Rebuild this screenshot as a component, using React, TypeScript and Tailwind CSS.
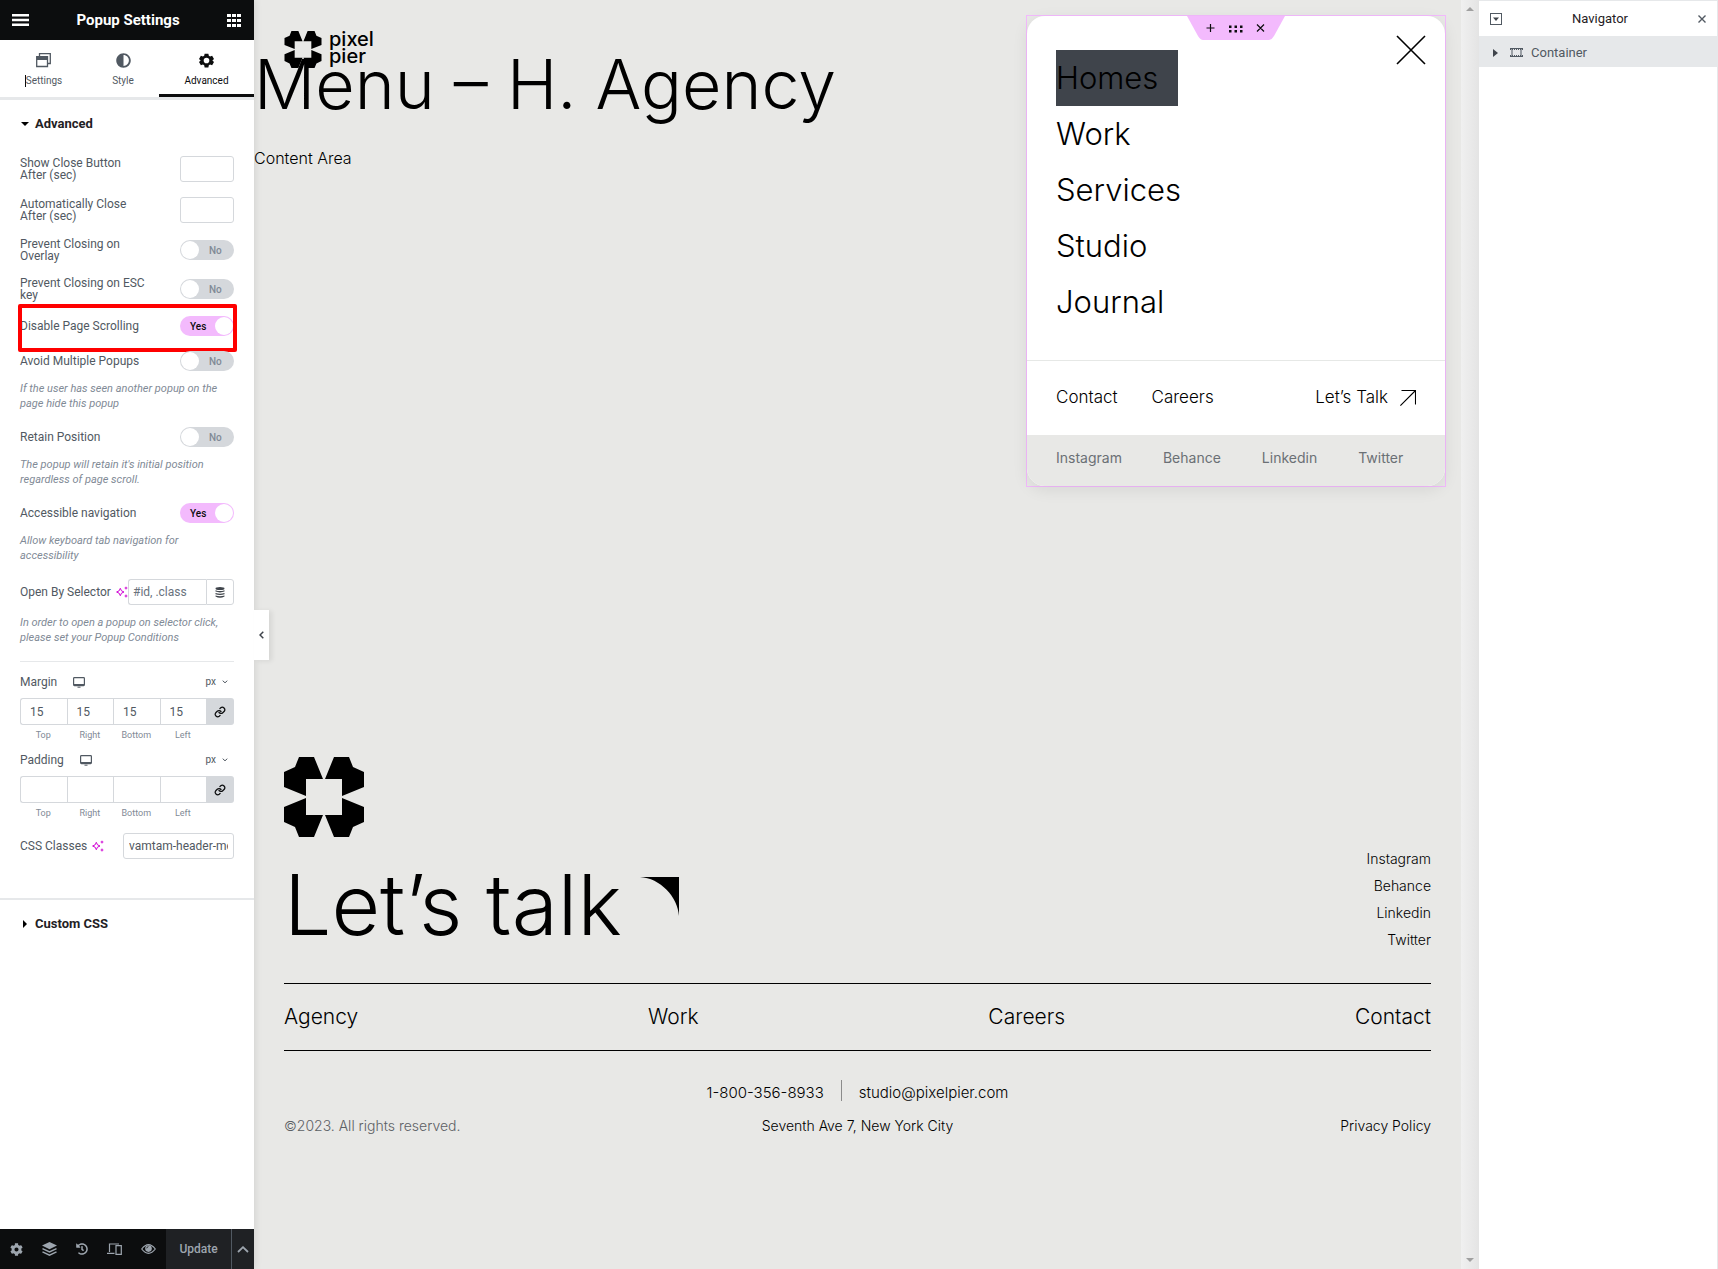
import type { ReactNode } from 'react'
import { FaAdjust, FaCog, FaHistory } from 'react-icons/fa'

const LABEL = 'text-xs leading-3 text-[#515962]'
const FIELD = 'h-[26px] rounded-[3px] border border-[#d5d8dc] bg-white text-xs text-[#515962] outline-none'

function Mark({ className }: { className: string }) {
  return (
    <svg viewBox="0 0 80 80" className={className} aria-hidden="true">
      <path d="M15 0H30L39 22H22V39L0 30V15L11 10Z" />
      <path d="M65 0H50L41 22H58V39L80 30V15L69 10Z" />
      <path d="M15 80H30L39 58H22V41L0 50V65L11 70Z" />
      <path d="M65 80H50L41 58H58V41L80 50V65L69 70Z" />
    </svg>
  )
}

function Sparkle() {
  return (
    <svg viewBox="0 0 12 12" className="size-3 shrink-0" aria-hidden="true">
      <path d="M4.300 2.300Q4.800 5.500 8 6Q4.800 6.500 4.300 9.700Q3.800 6.500 .6 6Q3.800 5.500 4.300 2.300Z" fill="none" stroke="#d004d4" strokeLinejoin="round" />
      <path d="M10 .2L10.6 1.5L12 2L10.6 2.6L10 4L9.4 2.6L8 2L9.4 1.5ZM10 8L10.6 9.4L12 10L10.6 10.6L10 12L9.4 10.6L8 10L9.4 9.4Z" fill="#d004d4" />
    </svg>
  )
}

function Row({ id, label, ai, children }: { id: string; label: string; ai?: boolean; children: ReactNode }) {
  return (
    <div className="flex items-center justify-between">
      <div className="flex items-center gap-[5px]">
        <label htmlFor={id} className={`${LABEL} max-w-[130px]`}>
          {label}
        </label>
        {ai && <Sparkle />}
      </div>
      {children}
    </div>
  )
}

function Toggle({ id, label, on }: { id: string; label: string; on?: boolean }) {
  return (
    <Row id={id} label={label}>
      <label className="relative h-5 w-[54px] shrink-0">
        <input id={id} type="checkbox" defaultChecked={on} className="peer absolute inset-0 opacity-0" />
        <span className="flex h-5 items-center rounded-full bg-[#d5d8dc] pl-[29px] text-[10px] font-medium text-[#818a96] peer-checked:hidden">
          No
        </span>
        <span className="hidden h-5 items-center rounded-full bg-[#f3bafd] pl-[10px] text-[10px] font-medium text-[#0c0d0e] peer-checked:flex">
          Yes
        </span>
        <span className="absolute top-px left-px size-[18px] rounded-full bg-white peer-checked:left-[35px]" />
      </label>
    </Row>
  )
}

function Hint({ children }: { children: ReactNode }) {
  return <p className="-mt-[5px] pb-px text-[11px] leading-[15px] text-[#818a96] italic">{children}</p>
}

function Dimensions({ name, value }: { name: string; value?: string }) {
  return (
    <fieldset>
      <div className="flex h-[10px] items-center justify-between">
        <div className="flex items-center gap-4">
          <legend className={LABEL}>{name}</legend>
          <svg viewBox="0 0 12 11" className="h-[11px] w-3" fill="none" stroke="#515962" aria-hidden="true">
            <rect x=".6" y=".6" width="10.8" height="8" rx=".8" strokeWidth="1.2" />
            <path d="M1 7.8H11" strokeWidth="1.6" />
            <path d="M4.5 10.2H7.5" />
          </svg>
        </div>
        <button className="flex items-center gap-[6px] pr-[6px] text-[10px] leading-3 text-[#515962]">
          px
          <svg viewBox="0 0 6 4" className="h-1 w-[6px]" fill="none" stroke="#515962" aria-hidden="true">
            <path d="M.7 .7L3 2.8L5.3 .7" />
          </svg>
        </button>
      </div>
      <div className="mt-[11px] flex">
        {['Top', 'Right', 'Bottom', 'Left'].map((side) => (
          <label key={side} className="flex flex-1 flex-col gap-[5px] text-center text-[9px] leading-[10px] text-[#818a96]">
            <input
              defaultValue={value}
              className={`h-[27px] w-full border border-r-0 border-[#d5d8dc] bg-white pl-[9px] text-xs text-[#515962] outline-none ${side === 'Top' ? 'rounded-l-[3px]' : ''}`}
            />
            {side}
          </label>
        ))}
        <button aria-label="Link values" className="flex h-[27px] w-7 items-center justify-center rounded-r-[3px] bg-[#d5d8dc]">
          <svg viewBox="0 0 24 24" className="size-3" fill="none" stroke="#0c0d0e" strokeWidth="2.500" strokeLinecap="round" aria-hidden="true">
            <path d="M10 13a5 5 0 0 0 7.5.5l3-3a5 5 0 0 0-7-7l-1.700 1.700M14 11a5 5 0 0 0-7.500-.5l-3 3a5 5 0 0 0 7 7l1.700-1.700" />
          </svg>
        </button>
      </div>
    </fieldset>
  )
}

function Panel() {
  return (
    <aside className="relative z-10 flex w-[254px] shrink-0 flex-col bg-white font-[Roboto,sans-serif] shadow-[0_0_8px_rgba(0,0,0,0.12)]">
      <header className="flex h-10 items-center justify-between bg-[#0c0d0e] pr-[13px] pl-3 text-white">
        <button aria-label="Menu">
          <svg viewBox="0 0 17 12" className="h-3 w-[17px]" fill="currentColor" aria-hidden="true">
            <path d="M0 0H17V2.400H0ZM0 4.800H17V7.200H0ZM0 9.600H17V12H0Z" />
          </svg>
        </button>
        <h1 className="text-[15px] font-bold">Popup Settings</h1>
        <button aria-label="Widgets">
          <svg viewBox="0 0 14 13" className="h-[13px] w-[14px]" fill="currentColor" aria-hidden="true">
            <path d="M0 0h4v3H0zM5 0h4v3H5zM10 0h4v3h-4zM0 5h4v3H0zM5 5h4v3H5zM10 5h4v3h-4zM0 10h4v3H0zM5 10h4v3H5zM10 10h4v3h-4z" />
          </svg>
        </button>
      </header>

      <nav className="flex h-[60px] border-b-[3px] border-[#e6e8ea] text-[10px] leading-3 text-[#515962]">
        <button className="flex w-[87px] flex-col items-center gap-[7px] pt-[13px]">
          <svg viewBox="0 0 15 15" className="size-[15px]" aria-hidden="true">
            <path d="M3.500 3V.7H14.300V10.500H12" fill="none" stroke="currentColor" strokeWidth="1.300" />
            <path d="M.7 3.700H11.500V13.500H.7Z" fill="none" stroke="currentColor" strokeWidth="1.300" />
            <path d="M.7 3.700H11.500V7H.7Z" fill="currentColor" />
          </svg>
          <span className="border-l border-[#0c0d0e]">Settings</span>
        </button>
        <button className="flex w-[72px] flex-col items-center gap-[7px] pt-[13px]">
          <FaAdjust size={15} />
          Style
        </button>
        <button className="flex w-[95px] flex-col items-center gap-[7px] border-b-[3px] border-[#0c0d0e] pt-[13px] text-[#0c0d0e]">
          <svg viewBox="0 0 24 24" className="size-[15px]" fill="currentColor" fillRule="evenodd" aria-hidden="true">
            <path d="M9 1h6l.7 3.400 2 1.200L21 4.500l3 5.100L21.400 12 24 14.400l-3 5.100-3.300-1.100-2 1.200L15 23H9l-.7-3.400-2-1.200L3 19.500 0 14.400 2.600 12 0 9.600l3-5.100 3.300 1.100 2-1.200zM12 7.500a4.500 4.500 0 1 0 0 9 4.500 4.500 0 1 0 0-9z" />
          </svg>
          Advanced
        </button>
      </nav>

      <section className="border-b-2 border-[#e6e8ea] px-5 pb-[39px]">
        <button className="flex h-14 w-full items-center gap-[5px] pb-2 text-[13px] font-bold text-[#1f2124]">
          <svg viewBox="0 0 8 4" className="mx-px h-1 w-2" aria-hidden="true">
            <path d="M0 0H8L4 4Z" />
          </svg>
          Advanced
        </button>

        <div className="flex flex-col gap-[15px]">
          <Row id="show-close" label="Show Close Button After (sec)">
            <input id="show-close" className={`${FIELD} w-[54px] px-2`} />
          </Row>
          <Row id="auto-close" label="Automatically Close After (sec)">
            <input id="auto-close" className={`${FIELD} w-[54px] px-2`} />
          </Row>
          <Toggle id="overlay" label="Prevent Closing on Overlay" />
          <Toggle id="esc" label="Prevent Closing on ESC key" />
          <div className="relative">
            <Toggle id="scroll" label="Disable Page Scrolling" on />
            <div className="pointer-events-none absolute -top-3 -right-[3px] -bottom-4 -left-[2px] rounded-[2px] border-4 border-[#ff0000]" />
          </div>
          <Toggle id="multiple" label="Avoid Multiple Popups" />
          <Hint>If the user has seen another popup on the page hide this popup</Hint>
          <Toggle id="retain" label="Retain Position" />
          <Hint>The popup will retain it's initial position regardless of page scroll.</Hint>
          <Toggle id="a11y" label="Accessible navigation" on />
          <Hint>Allow keyboard tab navigation for accessibility</Hint>
          <Row id="selector" label="Open By Selector" ai>
            <div className="flex w-[106px]">
              <input id="selector" placeholder="#id, .class" className={`${FIELD} w-[78px] rounded-r-none border-r-0 px-1 placeholder:text-[#69727d]`} />
              <button aria-label="Dynamic tags" className="flex h-[26px] w-7 items-center justify-center rounded-r-[3px] border border-[#d5d8dc]">
                <svg viewBox="0 0 10 11" className="h-[11px] w-[10px]" fill="#3f444b" aria-hidden="true">
                  <ellipse cx="5" cy="1.600" rx="4.500" ry="1.500" />
                  <path d="M.5 3.200Q5 5 9.500 3.200V4.600Q5 6.200 .5 4.600ZM.5 5.900Q5 7.500 9.500 5.900V7.200Q5 8.800 .5 7.200ZM.5 8.500Q5 10 9.500 8.500V9.500Q5 12 .5 9.500Z" />
                </svg>
              </button>
            </div>
          </Row>
          <Hint>In order to open a popup on selector click, please set your Popup Conditions</Hint>
          <hr className="border-[#e6e8ea]" />
          <Dimensions name="Margin" value="15" />
          <Dimensions name="Padding" />
          <Row id="classes" label="CSS Classes" ai>
            <input id="classes" defaultValue="vamtam-header-menu" className={`${FIELD} w-[111px] px-[5px]`} />
          </Row>
        </div>
      </section>

      <button className="flex h-12 items-center gap-2 px-[23px] text-[13px] font-bold text-[#1f2124]">
        <svg viewBox="0 0 4 8" className="h-2 w-1" aria-hidden="true">
          <path d="M0 0L4 4L0 8Z" />
        </svg>
        Custom CSS
      </button>

      <footer className="mt-auto flex h-10 bg-[#0c0d0e] text-[#9da5ae]">
        <div className="flex flex-1 items-center justify-between px-[10px]">
          <button aria-label="Settings"><FaCog size={13} /></button>
          <button aria-label="Navigator">
            <svg viewBox="0 0 15 14" className="h-[14px] w-[15px]" aria-hidden="true">
              <path d="M7.500 0L15 3.600L7.500 7.200L0 3.600Z" fill="currentColor" />
              <path d="M.5 6.600L7.500 10L14.500 6.600M.5 9.800L7.500 13.200L14.500 9.800" fill="none" stroke="currentColor" strokeWidth="1.400" />
            </svg>
          </button>
          <button aria-label="History"><FaHistory size={12} /></button>
          <button aria-label="Responsive mode">
            <svg viewBox="0 0 15 12" className="h-3 w-[15px]" fill="none" stroke="currentColor" strokeWidth="1.200" aria-hidden="true">
              <path d="M2.500 9V1H12M0 10.300H7.500M9 2.700H14.300V11.300H9Z" />
            </svg>
          </button>
          <button aria-label="Preview">
            <svg viewBox="0 0 15 10" className="h-[10px] w-[15px]" aria-hidden="true">
              <path d="M.7 5Q7.500-3.600 14.300 5Q7.500 13.600 .7 5Z" fill="none" stroke="currentColor" strokeWidth="1.200" />
              <circle cx="7.500" cy="4.600" r="3.300" fill="currentColor" />
              <path d="M5.700 4.300A2 2 0 0 1 7.400 2.600" stroke="#0c0d0e" fill="none" strokeWidth=".8" />
            </svg>
          </button>
        </div>
        <button className="w-[65px] bg-[#1f2124] text-xs font-medium">Update</button>
        <button aria-label="Save options" className="flex w-[23px] items-center justify-center border-l border-[#515962] bg-[#1f2124]">
          <svg viewBox="0 0 12 7" className="h-[7px] w-3" fill="none" stroke="currentColor" strokeWidth="1.800" aria-hidden="true">
            <path d="M1 6L6 1.200L11 6" />
          </svg>
        </button>
      </footer>

      <button aria-label="Hide panel" className="absolute top-[610px] left-full flex h-[50px] w-[15px] items-center justify-center bg-white shadow-[3px_1px_5px_rgba(0,0,0,0.08)]">
        <svg viewBox="0 0 5 8" className="h-2 w-[5px]" fill="none" stroke="#3f444b" strokeWidth="1.500" aria-hidden="true">
          <path d="M4.300 .7L1 4L4.300 7.300" />
        </svg>
      </button>
    </aside>
  )
}

function MenuPopup() {
  return (
    <div className="absolute top-[15px] right-[15px] w-[420px] border border-[#f3bafd]">
      <div className="overflow-hidden rounded-[18px] bg-white shadow-[0_4px_16px_rgba(0,0,0,0.08)]">
        <nav className="flex w-[180px] flex-col px-[29px] pt-[34px] pb-[30px] text-[31px] leading-[56px] font-light">
          {['Homes', 'Work', 'Services', 'Studio', 'Journal'].map((item) => (
            <a key={item} href="#" className={item === 'Homes' ? 'bg-[#3f444b]' : ''}>
              {item}
            </a>
          ))}
        </nav>
        <div className="flex h-[75px] items-center border-t border-[#e6e8e6] px-[29px] text-[17px] font-light">
          <a href="#" className="mr-[34px]">Contact</a>
          <a href="#">Careers</a>
          <a href="#" className="ml-auto flex items-center gap-3">
            Let’s Talk
            <svg viewBox="0 0 16 16" className="size-4" fill="none" stroke="currentColor" aria-hidden="true">
              <path d="M.4 15.600L15.500 .5M1.500 .5H15.500V14.500" strokeWidth="1.100" />
            </svg>
          </a>
        </div>
        <div className="flex h-[51px] gap-[41px] bg-[#e8e8e6] px-[29px] pt-[11px] text-sm leading-6 text-[#6b7075]">
          <a href="#">Instagram</a>
          <a href="#">Behance</a>
          <a href="#">Linkedin</a>
          <a href="#">Twitter</a>
        </div>
      </div>

      <div className="absolute inset-x-0 top-0 flex justify-center">
        <svg viewBox="0 0 98 24" className="h-6 w-[98px]" aria-hidden="true">
          <path d="M0 0H98L87 20Q84.500 24 82 24H16Q13.500 24 11 20Z" fill="#f3bafd" />
          <path d="M23.500 8V16M19.500 12H27.500M70 8.500L77 15.500M77 8.500L70 15.500" stroke="#0c0d0e" strokeWidth="1.200" />
          <path d="M42 9.500h2.500v2.500H42zM47.500 9.500H50v2.500h-2.500zM53 9.500h2.500v2.500H53zM42 14h2.500v2.500H42zM47.500 14H50v2.500h-2.500zM53 14h2.500v2.500H53z" fill="#0c0d0e" />
        </svg>
      </div>
      <button aria-label="Close" className="absolute top-[19px] right-[19px]">
        <svg viewBox="0 0 30 30" className="size-[30px]" stroke="#000" strokeWidth="1.600" aria-hidden="true">
          <path d="M1 1L29 29M29 1L1 29" />
        </svg>
      </button>
    </div>
  )
}

function Preview() {
  return (
    <main className="relative flex-1 bg-[#e8e8e6] font-[Inter,sans-serif] text-black">
      <a href="#" className="absolute top-[31px] left-[30px] flex gap-[7px]">
        <Mark className="h-[37px] w-[38px]" />
        <span className="text-xl leading-[17px] font-medium">
          pixel
          <br />
          pier
        </span>
      </a>
      <h2 className="pt-10 text-[68px] leading-[88px] font-light">Menu – H. Agency</h2>
      <p className="mt-[18px] text-base font-light">Content Area</p>

      <MenuPopup />

      <footer className="mt-[587px] px-[30px]">
        <Mark className="size-20" />
        <div className="flex items-start justify-between">
          <a href="#" className="mt-5 flex gap-[18px] text-[84px] leading-[96px] font-light">
            Let’s talk
            <svg viewBox="0 0 39 39" className="mt-5 size-[39px]" aria-hidden="true">
              <path d="M0 0H39V39C38 20 20 1 0 0Z" />
            </svg>
          </a>
          <div className="mt-2 flex flex-col text-right text-sm leading-[27px] font-light">
            <a href="#">Instagram</a>
            <a href="#">Behance</a>
            <a href="#">Linkedin</a>
            <a href="#">Twitter</a>
          </div>
        </div>
        <nav className="mt-[30px] flex h-[68px] items-center justify-between border-y border-black text-[21px] font-light">
          <a href="#">Agency</a>
          <a href="#">Work</a>
          <a href="#">Careers</a>
          <a href="#">Contact</a>
        </nav>
        <div className="mt-[29px] flex items-end justify-center text-[15px] leading-6 font-light">
          <a href="tel:18003568933">1-800-356-8933</a>
          <span className="mx-[17px] mb-1 h-[21px] border-l border-[#8b8b8b]" />
          <a href="mailto:studio@pixelpier.com">studio@pixelpier.com</a>
        </div>
        <div className="mt-[9px] grid grid-cols-3 text-sm leading-6 font-light">
          <span className="text-[#5c6064]">©2023. All rights reserved.</span>
          <span className="text-center">Seventh Ave 7, New York City</span>
          <a href="#" className="text-right">Privacy Policy</a>
        </div>
      </footer>
    </main>
  )
}

export default function App() {
  return (
    <div className="flex min-h-screen">
      <Panel />
      <Preview />

      {/* scrollbar of the preview frame */}
      <div className="flex w-[18px] shrink-0 flex-col items-center justify-between bg-linear-to-r from-[#f0f0f0] to-[#e4e4e4] py-[7px]">
        <svg viewBox="0 0 8 4" className="h-1 w-2" fill="#a0a0a0" aria-hidden="true"><path d="M0 4L4 0L8 4Z" /></svg>
        <svg viewBox="0 0 8 4" className="h-1 w-2" fill="#a0a0a0" aria-hidden="true"><path d="M0 0L4 4L8 0Z" /></svg>
      </div>

      <aside className="w-[239px] shrink-0 border-t border-r border-[#e6e8ea] bg-white font-[Roboto,sans-serif] text-[13px]">
        <header className="flex h-[35px] items-center justify-between px-[11px] text-[#1f2124]">
          <button aria-label="Expand all">
            <svg viewBox="0 0 12 12" className="size-3" aria-hidden="true">
              <rect x=".5" y=".5" width="11" height="11" fill="none" stroke="#515962" />
              <path d="M3 4.500H9L6 8Z" fill="#3f444b" />
            </svg>
          </button>
          <h2>Navigator</h2>
          <button aria-label="Close navigator">
            <svg viewBox="0 0 8 8" className="size-2" stroke="#515962" strokeWidth="1.400" aria-hidden="true">
              <path d="M.5 .5L7.500 7.500M7.500 .5L.5 7.500" />
            </svg>
          </button>
        </header>
        <button className="flex h-[31px] w-full items-center bg-[#e6e8ea] px-[14px] pt-0.5 text-[#515962]">
          <svg viewBox="0 0 5 8" className="h-2 w-[5px]" fill="#3f444b" aria-hidden="true"><path d="M0 0L5 4L0 8Z" /></svg>
          <svg viewBox="0 0 13 9" className="mr-2 ml-3 h-[9px] w-[13px]" fill="none" stroke="#515962" aria-hidden="true">
            <path d="M2 0V9M11 0V9M.5 0V2M12.500 0V2M.5 7V9M12.500 7V9" />
            <path d="M0 .5H13M0 8.500H13" />
            <path d="M2 1.500H11M2 7.500H11" strokeDasharray="1 1" />
          </svg>
          Container
        </button>
      </aside>
    </div>
  )
}
